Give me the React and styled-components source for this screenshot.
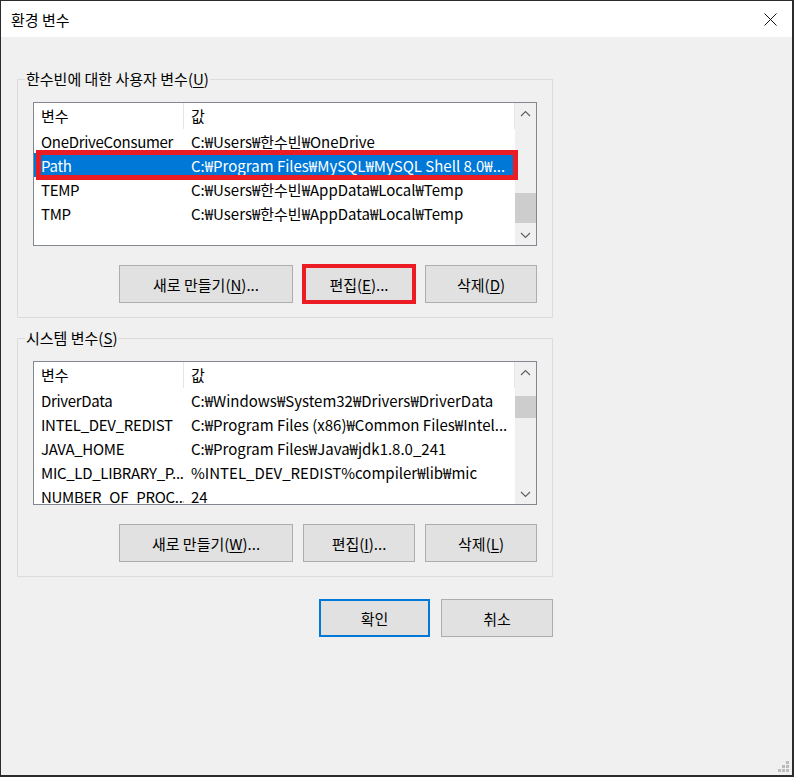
import React from 'react';
import styled, { createGlobalStyle } from 'styled-components';

const Global = createGlobalStyle`
  html, body { margin: 0; padding: 0; background: #1e1e1e; }
  * { box-sizing: border-box; }
`

const userVars = [
  { name: 'OneDriveConsumer', value: 'C:₩Users₩한수빈₩OneDrive' },
  { name: 'Path', value: 'C:₩Program Files₩MySQL₩MySQL Shell 8.0₩...', selected: true },
  { name: 'TEMP', value: 'C:₩Users₩한수빈₩AppData₩Local₩Temp' },
  { name: 'TMP', value: 'C:₩Users₩한수빈₩AppData₩Local₩Temp' },
]

const systemVars = [
  { name: 'DriverData', value: 'C:₩Windows₩System32₩Drivers₩DriverData' },
  { name: 'INTEL_DEV_REDIST', value: 'C:₩Program Files (x86)₩Common Files₩Intel...' },
  { name: 'JAVA_HOME', value: 'C:₩Program Files₩Java₩jdk1.8.0_241' },
  { name: 'MIC_LD_LIBRARY_P...', value: '%INTEL_DEV_REDIST%compiler₩lib₩mic' },
  { name: 'NUMBER_OF_PROC...', value: '24' },
]

function Chevron({ down }) {
  return (
    <svg width="11" height="7" viewBox="0 0 11 7">
      <path d={down ? 'M1 1 L5.5 5.5 L10 1' : 'M1 6 L5.5 1.5 L10 6'} fill="none" stroke="#606060" strokeWidth="1.2" />
    </svg>
  )
}

function VarList({ rows, thumbTop, thumbSize }) {
  return (
    <List>
      <Table>
        <HeaderRow>
          <HeaderCell>변수</HeaderCell>
          <HeaderCell>값</HeaderCell>
        </HeaderRow>
        {rows.map((r) => (
          <Row key={r.name} $selected={r.selected}>
            <Cell $tight>{r.name}</Cell>
            <Cell>{r.value}</Cell>
          </Row>
        ))}
      </Table>
      <ScrollBar>
        <ArrowBox><Chevron /></ArrowBox>
        <Track>
          <Thumb $top={thumbTop} $size={thumbSize} />
        </Track>
        <ArrowBox><Chevron down /></ArrowBox>
      </ScrollBar>
    </List>
  )
}

export default function App() {
  return (
    <>
      <Global />
      <Window>
        <TitleBar>
          <Title>환경 변수</Title>
          <svg width="13" height="13" viewBox="0 0 13 13">
            <path d="M0.5 0.5 L12.5 12.5 M12.5 0.5 L0.5 12.5" stroke="#111" strokeWidth="1" />
          </svg>
        </TitleBar>
        <Body>
          <Group>
            <Legend>한수빈에 대한 사용자 변수(<u>U</u>)</Legend>
            <VarList rows={userVars} thumbTop={70} thumbSize={30} />
            <ButtonRow>
              <Button $w={174}>새로 만들기(<u>N</u>)...</Button>
              <Button $w={112} $marked>편집(<u>E</u>)...</Button>
              <Button $w={112}>삭제(<u>D</u>)</Button>
            </ButtonRow>
          </Group>
          <Group $second>
            <Legend>시스템 변수(<u>S</u>)</Legend>
            <VarList rows={systemVars} thumbTop={14} thumbSize={22} />
            <ButtonRow>
              <Button $w={174}>새로 만들기(<u>W</u>)...</Button>
              <Button $w={112}>편집(<u>I</u>)...</Button>
              <Button $w={112}>삭제(<u>L</u>)</Button>
            </ButtonRow>
          </Group>
          <Footer>
            <Button $w={111} $primary>확인</Button>
            <Button $w={112}>취소</Button>
          </Footer>
        </Body>
        <Grip width="11" height="11" viewBox="0 0 11 11">
          <rect x="8" y="0" width="3" height="3" />
          <rect x="4" y="4" width="3" height="3" />
          <rect x="8" y="4" width="3" height="3" />
          <rect x="0" y="8" width="3" height="3" />
          <rect x="4" y="8" width="3" height="3" />
          <rect x="8" y="8" width="3" height="3" />
        </Grip>
      </Window>
    </>
  )
}

const Window = styled.div`
  position: relative;
  width: 794px;
  height: 777px;
  border: 1px solid #2b2b2b;
  border-right-width: 2px;
  border-bottom-width: 2px;
  background: #f0f0f0;
  display: flex;
  flex-direction: column;
  font-family: "Noto Sans CJK KR", "Noto Sans", sans-serif;
  font-size: 15px;
  color: #000;
`
const TitleBar = styled.div`
  height: 36px;
  background: #fff;
  display: flex;
  align-items: center;
  justify-content: space-between;
  padding: 0 15px 0 10px;
`
const Title = styled.span`
  font-size: 15px;
`
const Body = styled.div`
  display: flex;
  flex-direction: column;
  padding: 32px 0 0 16px;
`
const Group = styled.fieldset`
  width: 536px;
  margin: ${(p) => (p.$second ? '10px 0 0' : '0')};
  padding: 0 15px 14px;
  border: 1px solid #dcdcdc;
  min-width: 0;
`
const Legend = styled.legend`
  margin-left: -8px;
  padding: 0 1px;
  line-height: 20px;
  u { text-underline-offset: 2px; }
`
const List = styled.div`
  margin-top: 13px;
  width: 504px;
  height: 144px;
  border: 1px solid #828790;
  background: #fff;
  display: flex;
  overflow: hidden;
`
const Table = styled.div`
  width: 481px;
  display: flex;
  flex-direction: column;
`
const HeaderRow = styled.div`
  display: grid;
  grid-template-columns: 150px 1fr;
  height: 26px;
  flex: none;
`
const HeaderCell = styled.div`
  padding-left: 7px;
  line-height: 26px;
  border-right: 1px solid #e5e5e5;
`
const Row = styled.div`
  position: relative;
  flex: none;
  display: grid;
  grid-template-columns: 150px 331px;
  height: 24px;
  line-height: 25px;
  background: ${(p) => (p.$selected ? '#0078d7' : 'transparent')};
  color: ${(p) => (p.$selected ? '#fff' : '#000')};
  &::after {
    content: '';
    display: ${(p) => (p.$selected ? 'block' : 'none')};
    position: absolute;
    top: -3px;
    bottom: -3px;
    left: 2px;
    right: -3px;
    border: 5px solid #ec1c24;
  }
`
const Cell = styled.div`
  padding-left: 7px;
  white-space: nowrap;
  overflow: hidden;
  letter-spacing: ${(p) => (p.$tight ? '-0.3px' : '0')};
`
const ScrollBar = styled.div`
  width: 21px;
  background: #f0f0f0;
  display: flex;
  flex-direction: column;
`
const ArrowBox = styled.div`
  height: 20px;
  display: flex;
  align-items: center;
  justify-content: center;
`
const Track = styled.div`
  flex: 1;
`
const Thumb = styled.div`
  margin-top: ${(p) => p.$top}px;
  height: ${(p) => p.$size}px;
  background: #cdcdcd;
`
const ButtonRow = styled.div`
  display: flex;
  justify-content: flex-end;
  gap: 10px;
  margin-top: 19px;
`
const Button = styled.button`
  width: ${(p) => p.$w}px;
  height: 38px;
  padding: 0;
  font: inherit;
  color: #000;
  background: #e1e1e1;
  border: ${(p) => (p.$primary ? '2px solid #0078d7' : '1px solid #adadad')};
  outline: ${(p) => (p.$marked ? '4px solid #ec1c24' : 'none')};
  outline-offset: -3px;
  u { text-underline-offset: 2px; }
`
const Footer = styled.div`
  width: 536px;
  display: flex;
  justify-content: flex-end;
  gap: 11px;
  margin-top: 22px;
`
const Grip = styled.svg`
  position: absolute;
  right: 3px;
  bottom: 3px;
  fill: #bcbcbc;
`
